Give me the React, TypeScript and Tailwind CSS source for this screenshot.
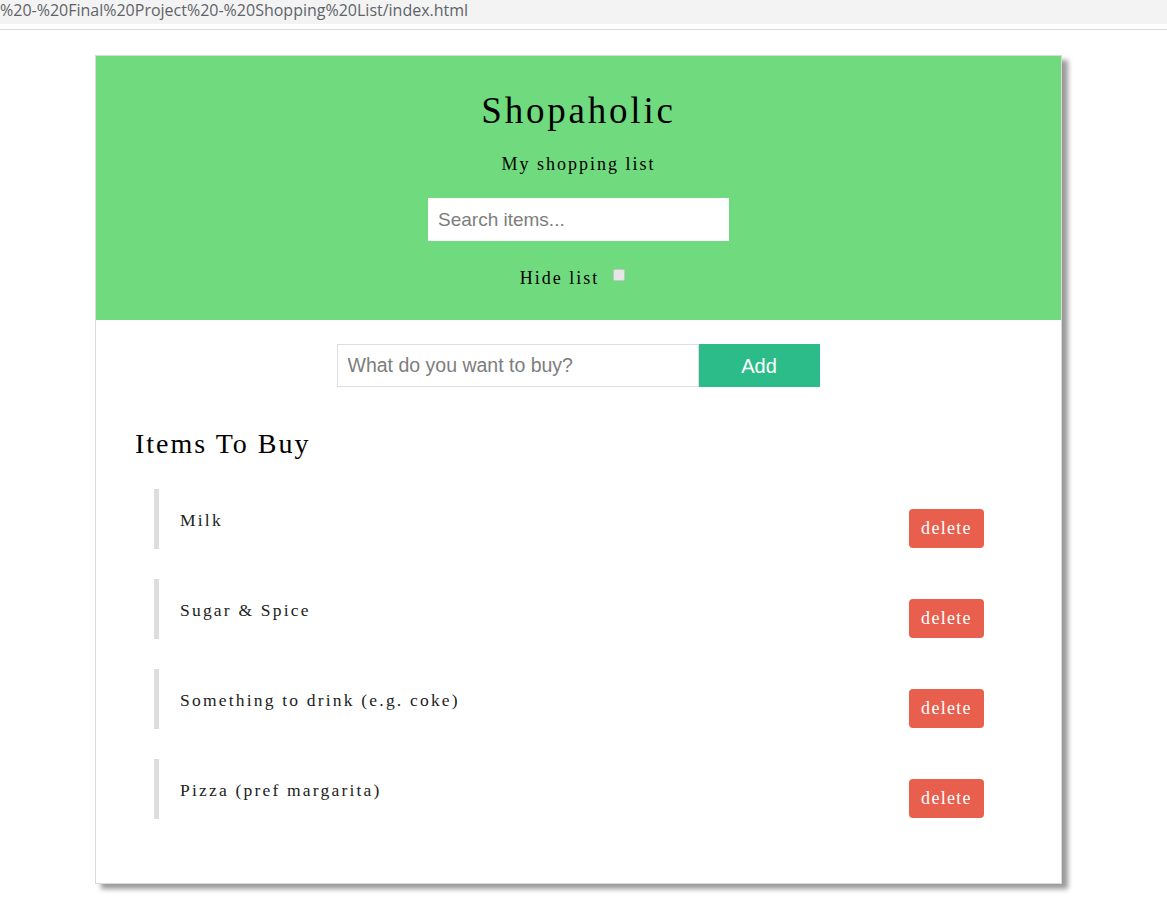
const items = ['Milk', 'Sugar & Spice', 'Something to drink (e.g. coke)', 'Pizza (pref margarita)'];

const serif = "font-['Liberation_Serif',serif]";
const sans = "font-['Liberation_Sans',Arial,sans-serif]";

export default function App() {
  return (
    <div className="min-h-[915px] bg-white">
      {/* browser url strip */}
      <div className="h-[24px] bg-[#f3f3f4] overflow-hidden whitespace-nowrap">
        <span className="block pt-[1px] text-[16px] leading-[18px] text-[#5f6368] font-['Open_Sans',sans-serif]">
          %20-%20Final%20Project%20-%20Shopping%20List/index.html
        </span>
      </div>
      <div className="h-[6px] border-b border-[#dcdcdc]" />

      <div className="pt-[25px] pb-[30px]">
        <div className="ml-[95px] w-[967px] border border-[#d9d9d9] bg-white shadow-[6px_5px_5px_#9a9a9a]">
          {/* header */}
          <div className={`bg-[#70da7e] pt-[33px] pb-[30px] flex flex-col items-center ${serif} text-black`}>
            <h1 className="text-[37px] leading-[44px] tracking-[2.8px]">Shopaholic</h1>
            <p className="mt-[19px] text-[18px] leading-[24px] tracking-[2px]">My shopping list</p>
            <input
              placeholder="Search items..."
              className={`mt-[22px] w-[301px] h-[43px] bg-white px-[10px] text-[19px] outline-none placeholder:text-[#7d7d7d] ${sans}`}
            />
            <div className="mt-[25px] mr-[12px] flex items-center h-[24px]">
              <span className="text-[18px] leading-[24px] tracking-[2px]">Hide list</span>
              <span className="ml-[14px] -mt-[6px] w-[12px] h-[12px] rounded-[2px] bg-[#e6e6e6] border border-[#c4c4c4]" />
            </div>
          </div>

          {/* add form */}
          <div className="pt-[24px] flex justify-center">
            <div className="flex ml-[-1px]">
              <input
                placeholder="What do you want to buy?"
                className={`w-[362px] h-[43px] border border-[#dddddd] px-[10px] text-[19.5px] outline-none placeholder:text-[#7d7d7d] ${sans}`}
              />
              <button className={`w-[121px] h-[43px] bg-[#2cbc89] text-white text-[20px] ${sans}`}>Add</button>
            </div>
          </div>

          {/* list */}
          <div className={`px-[39px] pb-[64px] ${serif}`}>
            <h2 className="mt-[39px] text-[28px] leading-[36px] tracking-[2px] text-black">Items To Buy</h2>
            <ul className="mt-[27px] ml-[19px] mr-[38px] flex flex-col gap-[30px]">
              {items.map(item => (
                <li key={item} className="h-[60px] border-l-[5px] border-[#dddddd] pl-[21px] flex justify-between">
                  <span className="pt-[19px] text-[17.5px] leading-[24px] tracking-[2.2px] text-[#222]">{item}</span>
                  <button className="mt-[20px] w-[75px] h-[39px] rounded-[4px] bg-[#e95f4e] text-white text-[18px] font-medium tracking-[1.3px]">
                    delete
                  </button>
                </li>
              ))}
            </ul>
          </div>
        </div>
      </div>
    </div>
  );
}
